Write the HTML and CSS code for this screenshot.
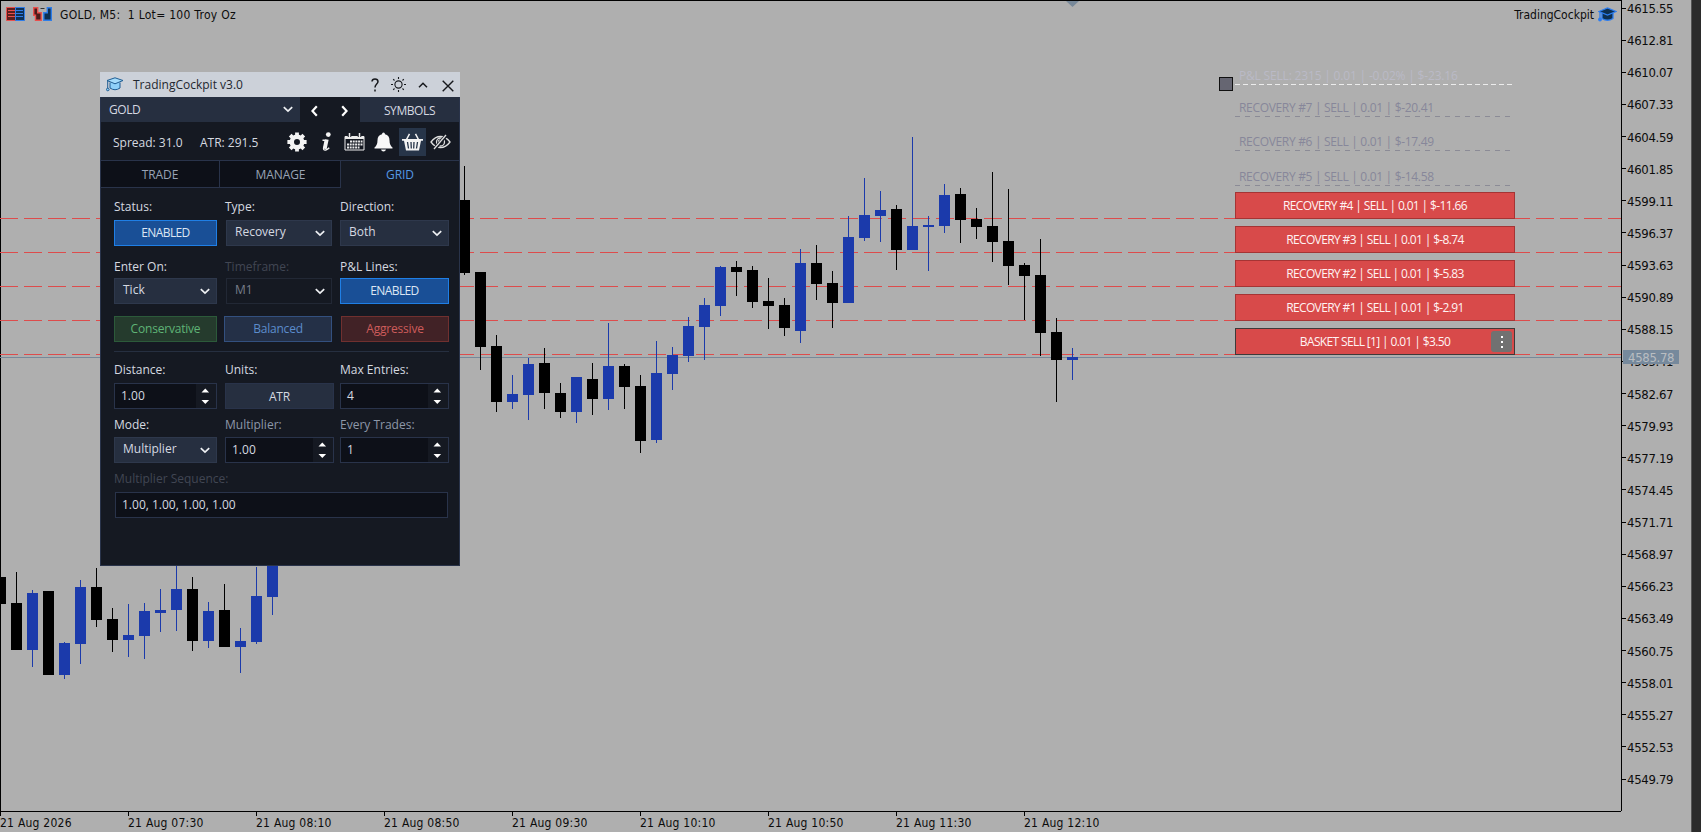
FILE: index.html
```html
<!DOCTYPE html>
<html lang="en">
<head>
    <meta charset="UTF-8">
    <meta name="viewport" content="width=device-width, initial-scale=1.0">
    <title>TradingCockpit</title>
    <link rel="stylesheet" href="styles.css">
</head>
<body>

<div class="workspace">
    <!-- Chart -->
    <div class="chart">
        <svg class="plot" id="plot" width="1621" height="811"></svg>

        <div class="chart-header">
            <svg class="book-icon" width="19" height="14" viewBox="0 0 19 14">
                <path d="M.5.5h9v13h-9z" fill="#5c1f1d" stroke="#e8504d"/>
                <path d="M9.500.5h9v13h-9z" fill="#0d3157" stroke="#2f7de8"/>
                <path d="M2 3.500h7M2 6.500h7M2 9.500h7" stroke="#e8504d"/>
                <path d="M10 3.500h7M10 6.500h7M10 9.500h7" stroke="#2f7de8"/>
            </svg>
            <svg class="trade-icon" width="19" height="14" viewBox="0 0 19 14">
                <path d="M.7.7h4v5h3.500v7.600H2.500v-5H.7z" fill="#4a1b19" stroke="#e8504d" stroke-width="1.400"/>
                <path d="M18.300.7h-4v5h-3.500v7.600h7.500z" fill="#0d2f50" stroke="#2f7de8" stroke-width="1.400"/>
                <path d="M7.500 1.500h4" stroke="#333"/>
            </svg>
            <span class="chart-title">GOLD, M5:&nbsp; 1 Lot= 100 Troy Oz</span>
            <span class="ea-name">TradingCockpit</span>
            <svg class="ea-icon" width="19" height="15" viewBox="0 0 19 15">
                <path d="M4 6v5.500q5.500 3.500 11 0V6" fill="#0d2f50" stroke="#2c7df0" stroke-width="1.300"/>
                <path d="M1 4.500L9.500 1l8.500 3.500L9.500 8z" fill="#0d2f50" stroke="#2c7df0" stroke-width="1.300"/>
                <path d="M2 5v7" stroke="#2c7df0" stroke-width="1.300"/>
                <circle cx="2" cy="12.500" r="1.900" fill="#2c7df0"/>
            </svg>
        </div>

        <!-- Order lines -->
        <div class="orders">
            <div class="pending pnl">P&amp;L SELL: 2315 | 0.01 | -0.02% | $-23.16<span class="handle"></span></div>
            <div class="pending">RECOVERY #7 | SELL | 0.01 | $-20.41</div>
            <div class="pending six">RECOVERY #6 | SELL | 0.01 | $-17.49</div>
            <div class="pending last">RECOVERY #5 | SELL | 0.01 | $-14.58</div>
            <div class="order">RECOVERY #4 | SELL | 0.01 | $-11.66</div>
            <div class="order">RECOVERY #3 | SELL | 0.01 | $-8.74</div>
            <div class="order">RECOVERY #2 | SELL | 0.01 | $-5.83</div>
            <div class="order">RECOVERY #1 | SELL | 0.01 | $-2.91</div>
            <div class="order basket">BASKET SELL [1] | 0.01 | $3.50
                <span class="more"><i></i><i></i><i></i></span>
            </div>
        </div>
    </div>

    <!-- Price axis -->
    <div class="price-axis">
        <div class="prices" id="prices"></div>
        <div class="price-tag">4585.78</div>
    </div>
    <div class="edge"></div>

    <div class="time-axis" id="times"></div>
</div>

<!-- Floating panel -->
<div class="panel">
    <div class="titlebar">
        <svg class="cap" width="18" height="15" viewBox="0 0 18 15">
            <path d="M4 5.500v5.500q5 3.500 10 0V5.500" fill="#8fd0f8" stroke="#1f5d93"/>
            <path d="M1 3.500L9 .8l8 2.700-8 3.300z" fill="#a5dcfb" stroke="#1f5d93"/>
            <path d="M1.700 4v7.500" stroke="#1f5d93"/>
            <circle cx="1.800" cy="12.500" r="1.300" fill="#8fd0f8" stroke="#1f5d93"/>
        </svg>
        <span class="panel-title">TradingCockpit v3.0</span>
        <svg class="tool help" width="10" height="14" viewBox="0 0 10 14" fill="none" stroke="#16181c" stroke-width="1.500">
            <path d="M2 3.500Q2.200 1 5 1T8 3.600C8 6.200 5 6 5 9.500M5 11.500v2"/>
        </svg>
        <svg class="tool sun" width="15" height="15" viewBox="0 0 15 15" fill="none" stroke="#16181c" stroke-width="1.100">
            <circle cx="7.500" cy="7.500" r="3.600"/>
            <path d="M7.500 0v2M7.500 13v2M0 7.500h2M13 7.500h2M2.200 2.200l1.300 1.300M11.500 11.500l1.300 1.300M12.800 2.200l-1.300 1.300M3.500 11.500l-1.300 1.300"/>
        </svg>
        <svg class="tool up" width="10" height="6" viewBox="0 0 10 6" fill="none" stroke="#16181c" stroke-width="1.500">
            <path d="M1 5.200L5 1.200l4 4"/>
        </svg>
        <svg class="tool close" width="12" height="12" viewBox="0 0 12 12" stroke="#16181c" stroke-width="1.400">
            <path d="M.7.7l10.600 10.600M11.300.7L.7 11.300"/>
        </svg>
    </div>

    <div class="symbol-row">
        <div class="symbol">GOLD
            <svg width="10" height="7" viewBox="0 0 10 7"><path class="chev" d="M.8 1.200L5 5.200l4.200-4"/></svg>
        </div>
        <div class="nav">
            <svg width="7" height="12" viewBox="0 0 7 12"><path class="arrow" d="M5.800 1.200L1.400 6l4.400 4.800"/></svg>
            <svg width="7" height="12" viewBox="0 0 7 12"><path class="arrow" d="M1.200 1.200L5.600 6l-4.400 4.800"/></svg>
        </div>
        <div class="symbols">SYMBOLS</div>
    </div>

    <div class="info-row">
        <span class="spread">Spread: 31.0</span>
        <span class="atr">ATR: 291.5</span>
        <div class="icons">
            <span class="icon">
                <svg width="20" height="20" viewBox="0 0 20 20">
                    <circle cx="10" cy="10" r="5.200" fill="none" stroke="#f4f4f4" stroke-width="4.400"/>
                    <path d="M10 .4v4M10 15.600v4M.4 10h4M15.600 10h4M3.200 3.200l3 3M13.800 13.800l3 3M16.800 3.200l-3 3M6.200 13.800l-3 3" stroke="#f4f4f4" stroke-width="3.800"/>
                </svg>
            </span>
            <span class="icon">
                <svg width="12" height="20" viewBox="0 0 12 20" fill="none" stroke="#f4f4f4">
                    <circle cx="8.300" cy="2.600" r="2.400" fill="#f4f4f4" stroke="none"/>
                    <path d="M2.500 8.200h2.800L3.700 15.500q-.7 3 2 2.500 2-.5 3.500-2.200" stroke-width="1.400"/>
                    <path d="M7 7.500L5 16.800" stroke-width="3.300"/>
                </svg>
            </span>
            <span class="icon">
                <svg width="21" height="18" viewBox="0 0 21 18" fill="none" stroke="#ececec">
                    <path d="M1 3.500h19v13.500H1z"/>
                    <path d="M1 4.500h19" stroke-width="3"/>
                    <path d="M5.500 0v4M15.500 0v4" stroke="#151922" stroke-width="3.500"/>
                    <path d="M5.500 0v4M15.500 0v4" stroke-width="1.500"/>
                    <path d="M6 8.500h12.500M3 11.500h15.500M3 14.500h12.500" stroke-width="2.200" stroke-dasharray="2 .7"/>
                </svg>
            </span>
            <span class="icon">
                <svg width="19" height="20" viewBox="0 0 19 20" fill="#f8f8f8">
                    <path d="M9.500.5Q11 .5 11 2.200q4.500 1 4.500 6 0 5 3 7.300v1H.5v-1q3-2.300 3-7.300 0-5 4.500-6Q8 .5 9.500.5z"/>
                    <path d="M7 17.500h5q-.5 2-2.500 2t-2.500-2z"/>
                </svg>
            </span>
            <span class="icon active">
                <svg width="21" height="18" viewBox="0 0 21 18" fill="none" stroke="#f4f4f4">
                    <path d="M4 7.500L7.500.8M17 7.500L13.500.8" stroke-width="1.500"/>
                    <path d="M0 6h21v1.800h-2L17 17.500H4L2 7.800H0z" fill="#f4f4f4" stroke="none"/>
                    <path d="M5.500 9l1 6.500M9 9l.3 6.500M12 9l-.3 6.500M15.500 9l-1 6.500" stroke="#273549" stroke-width="1.300"/>
                </svg>
            </span>
            <span class="icon">
                <svg width="21" height="16" viewBox="0 0 21 16" fill="none" stroke="#dedede" stroke-width="1.300">
                    <path d="M1 8q4-5.500 9.500-5.500T20 8q-4 5.500-9.500 5.500T1 8z"/>
                    <circle cx="10.500" cy="8" r="4"/>
                    <path d="M8.500 8q0-2 2-2"/>
                    <path d="M4.500 15L16.500 1" stroke="#151922" stroke-width="3.500"/>
                    <path d="M4 15L16 1"/>
                </svg>
            </span>
        </div>
    </div>

    <div class="tabs">
        <div class="tab">TRADE</div>
        <div class="tab manage">MANAGE</div>
        <div class="tab current">GRID</div>
    </div>

    <div class="form">
        <div class="row labels first">
            <label>Status:</label><label>Type:</label><label>Direction:</label>
        </div>
        <div class="row">
            <div class="btn on">ENABLED</div>
            <div class="select mid">Recovery<svg width="10" height="7" viewBox="0 0 10 7"><path class="chev" d="M.8 1.200L5 5.200l4.200-4"/></svg></div>
            <div class="select">Both<svg width="10" height="7" viewBox="0 0 10 7"><path class="chev" d="M.8 1.200L5 5.200l4.200-4"/></svg></div>
        </div>
        <div class="row labels second">
            <label>Enter On:</label><label class="off">Timeframe:</label><label>P&amp;L Lines:</label>
        </div>
        <div class="row">
            <div class="select">Tick<svg width="10" height="7" viewBox="0 0 10 7"><path class="chev" d="M.8 1.200L5 5.200l4.200-4"/></svg></div>
            <div class="select mid disabled">M1<svg width="10" height="7" viewBox="0 0 10 7"><path class="chev" d="M.8 1.200L5 5.200l4.200-4"/></svg></div>
            <div class="btn on">ENABLED</div>
        </div>
        <div class="row presets">
            <div class="btn conservative">Conservative</div>
            <div class="btn balanced">Balanced</div>
            <div class="btn aggressive">Aggressive</div>
        </div>
        <div class="row labels third">
            <label>Distance:</label><label>Units:</label><label>Max Entries:</label>
        </div>
        <div class="row">
            <div class="spin">1.00<svg width="20" height="24" viewBox="0 0 20 24"><path class="step" d="M5.500 8.500L9.300 4.500l3.800 4zM5.500 16h7.600l-3.800 4z"/></svg></div>
            <div class="btn units">ATR</div>
            <div class="spin">4<svg width="20" height="24" viewBox="0 0 20 24"><path class="step" d="M5.500 8.500L9.300 4.500l3.800 4zM5.500 16h7.600l-3.800 4z"/></svg></div>
        </div>
        <div class="row labels fourth">
            <label>Mode:</label><label class="dim">Multiplier:</label><label class="dim">Every Trades:</label>
        </div>
        <div class="row">
            <div class="select">Multiplier<svg width="10" height="7" viewBox="0 0 10 7"><path class="chev" d="M.8 1.200L5 5.200l4.200-4"/></svg></div>
            <div class="spin">1.00<svg width="20" height="24" viewBox="0 0 20 24"><path class="step" d="M5.500 8.500L9.300 4.500l3.800 4zM5.500 16h7.600l-3.800 4z"/></svg></div>
            <div class="spin">1<svg width="20" height="24" viewBox="0 0 20 24"><path class="step" d="M5.500 8.500L9.300 4.500l3.800 4zM5.500 16h7.600l-3.800 4z"/></svg></div>
        </div>
        <div class="labels fifth"><label class="off">Multiplier Sequence:</label></div>
        <div class="sequence">1.00, 1.00, 1.00, 1.00</div>
    </div>
</div>

<script src="chart.js"></script>
</body>
</html>
```
FILE: styles.css
```css
body {
    margin: 0;
    overflow: hidden;
    background-color: #afafaf;
    font-family: "Open Sans", "Noto Sans", sans-serif;
    font-size: 12px;
    color: #d5d9e0;
}
svg { display: block; flex: none; }
.workspace {
    display: grid;
    grid-template-columns: 1621px 70px 10px;
    grid-template-rows: 811px 21px;
    width: 1701px;
    height: 832px;
    color: #0c0c0c;
}

/* Chart */
.chart {
    position: relative;
    box-sizing: border-box;
    border-top: 1px solid #000;
    border-left: 1px solid #000;
}
.plot {
    position: absolute;
    top: -1px;
    left: -1px;
}
.chart-header {
    position: relative;
    display: flex;
    align-items: center;
    height: 26px;
    padding: 0 4px 0 5px;
    font-family: "DejaVu Sans Condensed", "DejaVu Sans", sans-serif;
    font-size: 12px;
}
.trade-icon { margin-left: 8px; }
.chart-title {
    margin-left: 8px;
    padding-top: 2px;
    letter-spacing: 0.28px;
}
.ea-name {
    margin-left: auto;
    margin-right: 4px;
    padding-top: 2px;
}

/* Order lines */
.orders {
    position: absolute;
    left: 1234px;
    top: 66px;
    width: 280px;
}
.pending {
    position: relative;
    height: 16px;
    line-height: 17px;
    padding: 0 0 2px 4px;
    margin-bottom: 16px;
    letter-spacing: -0.32px;
    color: #87879a;
    background: repeating-linear-gradient(to right, #8b8b96 0 5px, transparent 5px 10px) left bottom / 276px 1px no-repeat;
}
.pending.pnl {
    margin-bottom: 14px;
    letter-spacing: -0.18px;
    color: #babac6;
    background-image: repeating-linear-gradient(to right, #ececec 0 5px, transparent 5px 8px);
    background-size: 277px 1px;
}
.pending.six { margin-bottom: 17px; }
.pending.last { margin-bottom: 6px; }
.handle {
    position: absolute;
    left: -16px;
    top: 10px;
    width: 12px;
    height: 12px;
    background-color: #666672;
    border: 1px solid #101010;
}
.order {
    position: relative;
    box-sizing: border-box;
    height: 27px;
    line-height: 26px;
    margin-bottom: 7px;
    text-align: center;
    letter-spacing: -0.63px;
    color: #fff3f3;
    background-color: #d84a4a;
    border: 1px solid #a53434;
}
.order.basket { border-color: #3e3a3a; }
.more {
    position: absolute;
    right: 2px;
    top: 2px;
    display: flex;
    flex-direction: column;
    align-items: center;
    justify-content: center;
    gap: 3px;
    width: 21px;
    height: 21px;
    border-radius: 3px;
    background-color: #717171;
}
.more i {
    width: 2px;
    height: 2px;
    background-color: #fff;
}

/* Axes */
.price-axis {
    position: relative;
    border-left: 1px solid #000;
    overflow: hidden;
    font-family: "DejaVu Sans Condensed", "DejaVu Sans", sans-serif;
    font-size: 13px;
    letter-spacing: -0.3px;
}
.prices { margin-top: -8px; }
.price {
    display: flex;
    align-items: center;
    height: 32.125px;
}
.price span {
    line-height: 30px;
    padding-top: 2px;
}
.price::before {
    content: "";
    width: 4px;
    height: 1px;
    margin-right: 1px;
    background-color: #000;
}
.price-tag {
    position: absolute;
    left: 1px;
    top: 350px;
    width: 51px;
    height: 14px;
    line-height: 15px;
    padding-left: 5px;
    background-color: #76899c;
    color: #b9bdc1;
}
.edge {
    grid-row: 1 / 3;
    grid-column: 3;
    background-color: #2b2b2b;
    border-left: 1px solid #555;
}
.time-axis {
    grid-row: 2;
    grid-column: 1;
    display: flex;
    box-sizing: border-box;
    border-top: 1px solid #000;
    font-family: "DejaVu Sans Condensed", "DejaVu Sans", sans-serif;
    font-size: 12px;
    letter-spacing: 0.24px;
}
.time {
    width: 128px;
    line-height: 22px;
    background: linear-gradient(#000, #000) left top / 1px 4px no-repeat;
}

/* Panel */
.panel {
    position: absolute;
    left: 100px;
    top: 72px;
    box-sizing: border-box;
    width: 360px;
    height: 494px;
    background-color: #151922;
    border: 1px solid #29334a;
    border-top: 0;
}
.titlebar {
    display: flex;
    align-items: center;
    height: 25px;
    margin: 0 -1px;
    padding-left: 6px;
    background-color: #ccd1d9;
    color: #23272f;
}
.panel-title { margin-left: 9px; margin-right: auto; }
.help { margin-right: 11px; }
.sun { margin-right: 12px; }
.up { margin-right: 14px; }
.close { margin-right: 6px; margin-top: 2px; }
.symbol-row {
    display: flex;
    height: 25px;
    line-height: 28px;
}
.symbol {
    display: flex;
    justify-content: space-between;
    align-items: center;
    box-sizing: border-box;
    width: 199px;
    padding: 0 7px 0 8px;
    letter-spacing: -0.4px;
    background-color: #262f40;
}
.nav {
    display: flex;
    align-items: center;
    justify-content: center;
    gap: 23px;
    width: 60px;
    padding: 3px 2px 0 0;
    box-sizing: border-box;
}
.symbols {
    flex: 1;
    text-align: center;
    letter-spacing: -0.4px;
    background-color: #262f40;
}
.chev { fill: none; stroke: #eef0f3; stroke-width: 1.7; }
.arrow { fill: none; stroke: #fff; stroke-width: 2.2; }
.info-row {
    display: flex;
    align-items: center;
    height: 38px;
    padding-left: 12px;
}
.spread { width: 87px; padding-top: 3px; }
.atr { width: 83px; padding-top: 3px; }
.icons { display: flex; padding-top: 2px; }
.icon {
    display: flex;
    align-items: center;
    justify-content: center;
    width: 27px;
    height: 28px;
    margin-right: 2px;
}
.icon.active { background-color: #273549; }
.icon:last-child { margin-left: -1px; }
.tabs {
    display: flex;
    height: 28px;
    line-height: 28px;
    text-align: center;
    letter-spacing: -0.1px;
    color: #98a3b5;
}
.tab {
    box-sizing: border-box;
    width: 118px;
    background-color: #0d1018;
    border: 1px solid #29334a;
    border-left: 0;
}
.tab:first-child { width: 119px; }
.tab.manage { width: 121px; padding-left: 1px; }
.tab.current {
    background-color: #151922;
    border-right: 0;
    border-bottom: 0;
    color: #5498e4;
}

/* Grid settings */
.form { padding: 0 10px 0 13px; }
.row { display: flex; }
.row > * { box-sizing: border-box; width: 109px; }
.row > :first-child { width: 103px; margin-right: 8px; }
.row > :nth-child(2) { width: 109px; margin-right: 6px; }
.row > .mid:nth-child(2) { width: 106px; margin-left: 1px; margin-right: 8px; }
.labels { height: 18px; line-height: 18px; }
.first { margin-top: 10px; margin-bottom: 4px; }
.second { margin-top: 12px; margin-bottom: 2px; }
.third { margin-top: 9px; margin-bottom: 4px; }
.fourth { margin-top: 7px; margin-bottom: 3px; }
.fifth { margin-top: 7px; margin-bottom: 4px; }
.off { color: #414653; }
.dim { color: #8d97a8; }
.btn {
    height: 26px;
    line-height: 24px;
    text-align: center;
    letter-spacing: -0.2px;
    border: 1px solid #29334a;
}
.btn.on {
    background-color: #194f96;
    border-color: #1f7fe6;
    letter-spacing: -0.6px;
    color: #dde6f3;
}
.btn.units { background-color: #262f40; line-height: 26px; }
.select {
    display: flex;
    align-items: center;
    justify-content: space-between;
    height: 26px;
    line-height: 20px;
    padding: 0 6px 2px 8px;
    background-color: #262f40;
    border: 1px solid #2e384c;
}
.select svg { margin-top: 3px; }
.select.disabled {
    background-color: #151922;
    border-color: #222835;
    color: #777d89;
}
.presets {
    padding: 12px 0 9px;
    border-bottom: 1px solid #262f40;
}
.btn.conservative {
    background-color: #253b2d;
    border-color: #2c5a3a;
    color: #5fb376;
}
.row > .balanced:nth-child(2) {
    width: 108px;
    margin-left: -1px;
    margin-right: 9px;
    background-color: #243047;
    border-color: #33507f;
    color: #5c8ccc;
}
.row > .aggressive { width: 108px; }
.btn.aggressive {
    background-color: #412226;
    border-color: #70302f;
    color: #cd5c5b;
}
.spin {
    display: flex;
    justify-content: space-between;
    height: 26px;
    line-height: 24px;
    padding-left: 6px;
    background-color: #0d1018;
    border: 1px solid #29334a;
}
.spin svg { background-color: #151922; }
.step { fill: #fff; }
.sequence {
    box-sizing: border-box;
    width: 333px;
    height: 26px;
    line-height: 24px;
    margin-left: 1px;
    padding-left: 6px;
    background-color: #0d1018;
    border: 1px solid #29334a;
}
```
FILE: chart.js
```js
const svgNS = 'http://www.w3.org/2000/svg';
const plot = document.getElementById('plot');

// [bar index, up, high, body top, body bottom, low]
const candles = [
    [0, 0, 577, 577, 604, 604], [1, 0, 572, 603, 650, 650], [2, 1, 590, 593, 650, 667],
    [3, 0, 591, 591, 675, 675], [4, 1, 642, 643, 675, 679], [5, 1, 580, 587, 644, 664],
    [6, 0, 568, 587, 620, 627], [7, 0, 608, 619, 640, 652], [8, 1, 604, 635, 640, 657],
    [9, 1, 603, 611, 636, 659], [10, 1, 589, 610, 613, 632], [11, 1, 560, 589, 610, 631],
    [12, 0, 577, 589, 641, 651], [13, 1, 602, 611, 641, 648], [14, 0, 584, 610, 647, 647],
    [15, 1, 628, 641, 647, 673], [16, 1, 567, 596, 642, 644], [17, 1, 540, 540, 597, 615],
    [29, 0, 166, 200, 273, 275], [30, 0, 272, 272, 347, 370], [31, 0, 335, 346, 402, 412],
    [32, 1, 375, 394, 402, 409], [33, 1, 358, 364, 395, 420], [34, 0, 348, 363, 393, 409],
    [35, 0, 383, 393, 412, 418], [36, 1, 377, 377, 412, 423], [37, 0, 363, 379, 399, 415],
    [38, 1, 323, 366, 399, 410], [39, 0, 364, 366, 387, 409], [40, 0, 375, 386, 441, 453],
    [41, 1, 341, 373, 440, 443], [42, 1, 347, 355, 374, 390], [43, 1, 317, 326, 356, 362],
    [44, 1, 298, 305, 327, 360], [45, 1, 266, 267, 306, 316], [46, 0, 261, 267, 272, 296],
    [47, 0, 266, 270, 302, 308], [48, 0, 278, 301, 306, 329], [49, 0, 298, 305, 328, 336],
    [50, 1, 249, 263, 331, 343], [51, 0, 245, 263, 284, 300], [52, 0, 271, 283, 303, 328],
    [53, 1, 216, 237, 303, 303], [54, 1, 178, 215, 238, 241], [55, 1, 191, 210, 216, 242],
    [56, 0, 205, 209, 250, 270], [57, 1, 137, 226, 250, 250], [58, 1, 216, 225, 227, 271],
    [59, 1, 184, 195, 226, 233], [60, 0, 188, 194, 220, 243], [61, 0, 208, 219, 227, 239],
    [62, 0, 172, 226, 242, 262], [63, 0, 189, 241, 266, 285], [64, 0, 263, 265, 276, 320],
    [65, 0, 239, 275, 333, 356], [66, 0, 318, 332, 360, 402], [67, 1, 348, 357, 360, 380]
];

function add(tag, attrs) {
    const el = document.createElementNS(svgNS, tag);
    for (const name in attrs) el.setAttribute(name, attrs[name]);
    plot.appendChild(el);
}

// Grid levels
[218, 252, 286, 320, 354].forEach(y => {
    add('path', { d: `M0 ${y + 0.5}H1621`, stroke: '#dd4c4c', 'stroke-dasharray': '18 6' });
});

// Bid line
add('path', { d: 'M0 357.5H1621', stroke: '#778899' });

candles.forEach(([i, up, high, top, bottom, low]) => {
    const fill = up ? '#1b3aab' : '#000';
    add('rect', { x: i * 16, y: high, width: 1, height: low - high, fill });
    add('rect', { x: i * 16 - 5, y: top, width: 11, height: bottom - top, fill });
});

// Chart shift marker
add('path', { d: 'M1066 1h13l-6.500 6z', fill: '#778899' });

// Axis labels
const prices = document.getElementById('prices');
for (let i = 0; i < 25; i++) {
    prices.innerHTML += `<div class="price"><span>${(4615.55 - i * 2.74).toFixed(2)}</span></div>`;
}

const times = ['2026', '07:30', '08:10', '08:50', '09:30', '10:10', '10:50', '11:30', '12:10'];
document.getElementById('times').innerHTML = times.map(t => `<div class="time">21 Aug ${t}</div>`).join('');
```
